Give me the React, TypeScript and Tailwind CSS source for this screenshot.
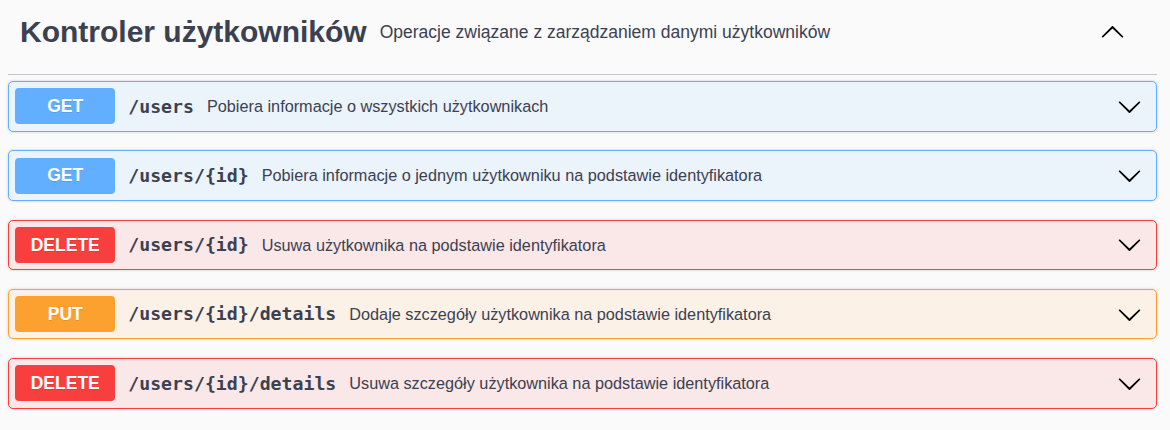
import React from 'react';

type Method = 'GET' | 'DELETE' | 'PUT';

const styles: Record<Method, { row: string; badge: string }> = {
  GET: { row: 'bg-[#ebf3fb] border-[#61affe]', badge: 'bg-[#61affe]' },
  DELETE: { row: 'bg-[#fae7e7] border-[#f93e3e]', badge: 'bg-[#f93e3e]' },
  PUT: { row: 'bg-[#fbf1e6] border-[#fca130]', badge: 'bg-[#fca130]' },
};

const endpoints: { method: Method; path: string; summary: string }[] = [
  { method: 'GET', path: '/users', summary: 'Pobiera informacje o wszystkich użytkownikach' },
  { method: 'GET', path: '/users/{id}', summary: 'Pobiera informacje o jednym użytkowniku na podstawie identyfikatora' },
  { method: 'DELETE', path: '/users/{id}', summary: 'Usuwa użytkownika na podstawie identyfikatora' },
  { method: 'PUT', path: '/users/{id}/details', summary: 'Dodaje szczegóły użytkownika na podstawie identyfikatora' },
  { method: 'DELETE', path: '/users/{id}/details', summary: 'Usuwa szczegóły użytkownika na podstawie identyfikatora' },
];

const Arrow = ({ up = false }: { up?: boolean }) => (
  <svg
    viewBox="0 0 20 20"
    className={`w-[25px] h-[25px] shrink-0 ${up ? 'rotate-180' : ''}`}
    fill="#000"
  >
    <path d="M17.418 6.109c.272-.268.709-.268.979 0s.271.701 0 .969l-7.908 7.83c-.27.268-.707.268-.979 0l-7.908-7.83c-.27-.268-.27-.701 0-.969.271-.268.709-.268.979 0L10 13.25l7.418-7.141z" />
  </svg>
);

const App: React.FC = () => {
  return (
    <div className="min-h-[430px] bg-[#fafafa] pl-[8px] pr-[13px] text-[#3b4151] font-['Liberation_Sans',Arial,sans-serif]">
      {/* Tag header */}
      <div className="pt-[15px] pb-[25px] border-b border-[#c4c6cb]">
        <div className="flex items-center h-[34px] pl-[12px]">
          <h3 className="text-[30px] font-bold leading-none whitespace-nowrap">Kontroler użytkowników</h3>
          <span className="ml-[13px] text-[17.5px] flex-1 whitespace-nowrap">
            Operacje związane z zarządzaniem danymi użytkowników
          </span>
          <div className="mr-[32px]">
            <Arrow up />
          </div>
        </div>
      </div>

      {/* Operations */}
      <div className="mt-[6px] flex flex-col gap-[18.75px]">
        {endpoints.map((e, i) => (
          <div
            key={i}
            className={`flex items-center border rounded-[5px] p-[6.25px] shadow-[0_0_3px_rgba(0,0,0,0.19)] ${styles[e.method].row}`}
          >
            <span
              className={`w-[100px] h-[36px] flex items-center justify-center rounded-[4px] text-white font-bold text-[17.5px] [text-shadow:0_1px_0_rgba(0,0,0,0.1)] ${styles[e.method].badge}`}
            >
              {e.method}
            </span>
            <span className="ml-[13px] font-['DejaVu_Sans_Mono',monospace] font-bold text-[18.2px] whitespace-nowrap">
              {e.path}
            </span>
            <span className="ml-[13px] text-[16.25px] flex-1 whitespace-nowrap">{e.summary}</span>
            <div className="mr-[8px]">
              <Arrow />
            </div>
          </div>
        ))}
      </div>
    </div>
  );
};

export default App;
